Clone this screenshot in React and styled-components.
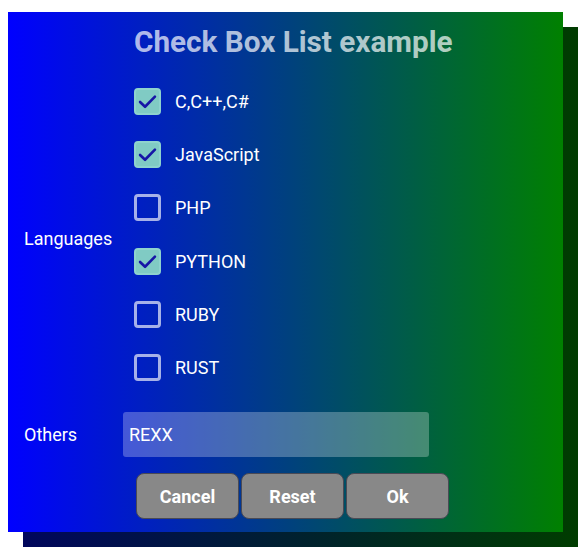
import { useState } from 'react'
import styled, { createGlobalStyle } from 'styled-components'

const GlobalStyle = createGlobalStyle`
    body{
        margin: 8px;
        font-family: Roboto, "Liberation Sans", sans-serif;
        background: #fff;
    }
`

const languages = [
    { name: 'C,C++,C#', checked: true },
    { name: 'JavaScript', checked: true },
    { name: 'PHP', checked: false },
    { name: 'PYTHON', checked: true },
    { name: 'RUBY', checked: false },
    { name: 'RUST', checked: false },
]

const CheckIcon = () => (
    <svg width="21" height="21" viewBox="0 0 24 24" fill="none">
        <path d="M3.5 12.5 L9.2 18 L20.5 6.5" stroke="#1616a6" strokeWidth="3" strokeLinecap="round" strokeLinejoin="round" />
    </svg>
)

const App = () => {
    const [items, setItems] = useState(languages)
    const [others, setOthers] = useState('REXX')

    const toggle = (i) => {
        setItems(items.map((it, j) => (j === i ? { ...it, checked: !it.checked } : it)))
    }

    return (
        <>
            <GlobalStyle />
            <Frame>
                <Panel>
                    <Title>Check Box List example</Title>
                    <FormRow>
                        <Label $offset={8}>Languages</Label>
                        <List>
                            {items.map((it, i) => (
                                <Item key={it.name} onClick={() => toggle(i)}>
                                    <Box $checked={it.checked}>{it.checked && <CheckIcon />}</Box>
                                    <span>{it.name}</span>
                                </Item>
                            ))}
                        </List>
                    </FormRow>
                    <FormRow $others>
                        <Label>Others</Label>
                        <TextInput value={others} onChange={(e) => setOthers(e.target.value)} />
                    </FormRow>
                    <Buttons>
                        <Button>Cancel</Button>
                        <Button>Reset</Button>
                        <Button>Ok</Button>
                    </Buttons>
                </Panel>
            </Frame>
        </>
    )
}

// frame keeps room for the dark offset copy behind the panel
const Frame = styled.div`
    position: relative;
    isolation: isolate;
    width: 570px;
    height: 535px;
    margin-top: 4px;
    &::before{
        content: '';
        position: absolute;
        left: 15px;
        top: 15px;
        right: 0;
        bottom: 0;
        background: linear-gradient(to right, #00065c, #003c00);
        z-index: 0;
    }
`

const Panel = styled.main`
    position: relative;
    z-index: 1;
    width: 555px;
    height: 520px;
    padding: 12px 16px 0;
    box-sizing: border-box;
    background: linear-gradient(to right, #0000ff, #008000);
`

const Title = styled.h1`
    margin: 0 0 15px 110px;
    font-size: 29.7px;
    font-weight: 700;
    color: rgba(255, 255, 255, 0.7);
    line-height: 36px;
`

const FormRow = styled.div`
    display: grid;
    grid-template-columns: 99px 1fr;
    align-items: center;
    margin-top: ${(p) => (p.$others ? '18px' : '0')};
`

const Label = styled.label`
    color: #fff;
    font-size: 18px;
    padding-top: ${(p) => p.$offset || 0}px;
`

const List = styled.div`
    display: flex;
    flex-direction: column;
    padding-left: 11px;
`

const Item = styled.div`
    height: 53.2px;
    display: flex;
    align-items: center;
    gap: 14px;
    color: #fff;
    font-size: 18px;
    cursor: pointer;
`

const Box = styled.span`
    width: 27px;
    height: 27px;
    box-sizing: border-box;
    border-radius: 4px;
    display: flex;
    align-items: center;
    justify-content: center;
    border: ${(p) => (p.$checked ? '2px solid #8ed3cd' : '3px solid rgba(255, 255, 255, 0.65)')};
    background: ${(p) => (p.$checked ? '#80cbc4' : 'transparent')};
`

const TextInput = styled.input`
    width: 306px;
    height: 45px;
    box-sizing: border-box;
    border: none;
    border-radius: 3px;
    padding: 0 6px;
    background: rgba(255, 255, 255, 0.27);
    color: #fff;
    font-family: inherit;
    font-size: 18px;
    outline: none;
`

const Buttons = styled.div`
    display: flex;
    gap: 2px;
    margin: 16px 0 0 112px;
`

const Button = styled.button`
    width: 103px;
    height: 46px;
    background: #888888;
    border: 1px solid #4a4a55;
    border-radius: 8px;
    color: #fff;
    font-family: inherit;
    font-size: 18px;
    font-weight: 700;
    cursor: pointer;
`

export default App
